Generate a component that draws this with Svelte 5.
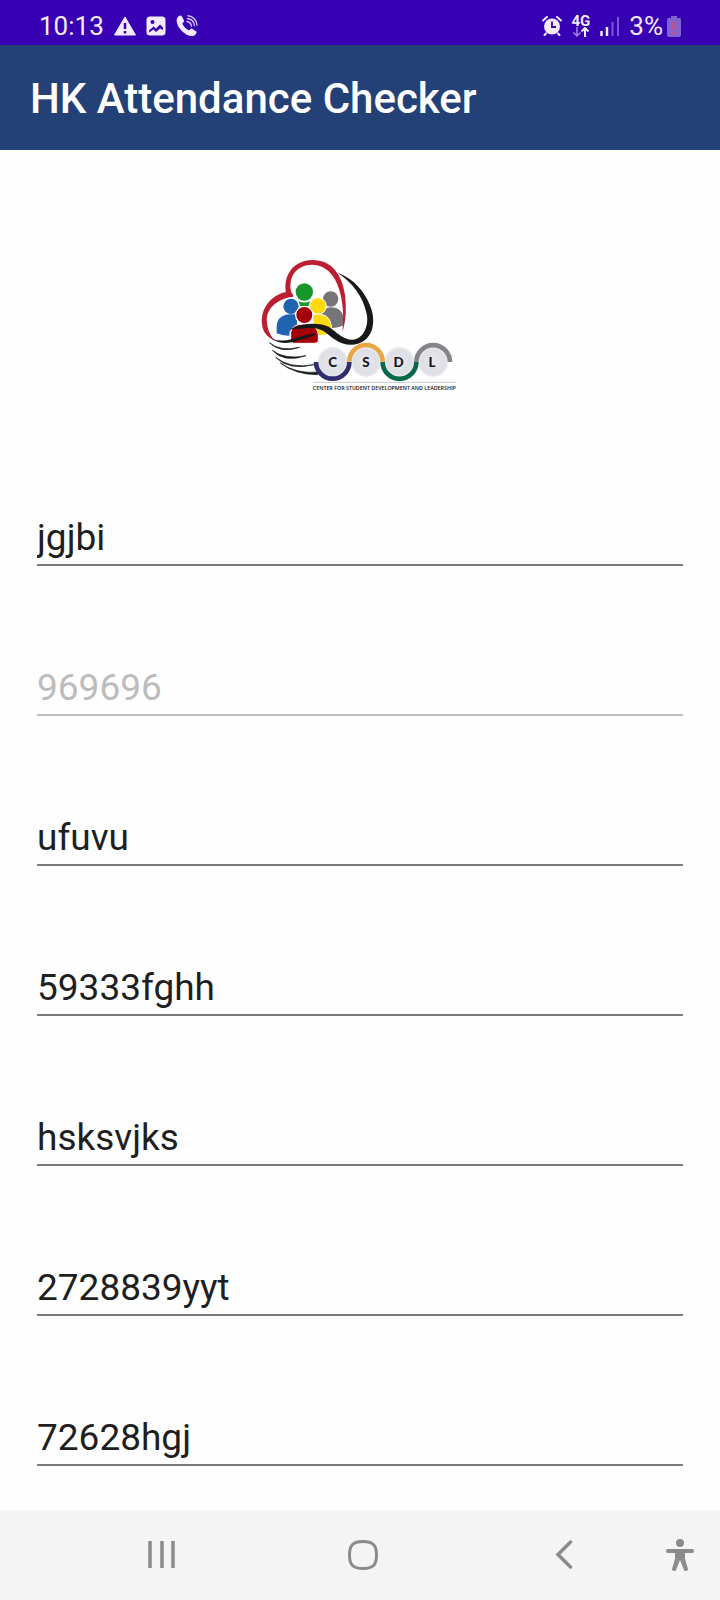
<script>
  let fields = $state([
    { id: 'name', label: 'Name', value: 'jgjbi', disabled: false },
    { id: 'student-id', label: 'Student ID', value: '969696', disabled: true },
    { id: 'course', label: 'Course', value: 'ufuvu', disabled: false },
    { id: 'contact', label: 'Contact', value: '59333fghh', disabled: false },
    { id: 'address', label: 'Address', value: 'hsksvjks', disabled: false },
    { id: 'guardian', label: 'Guardian', value: '2728839yyt', disabled: false },
    { id: 'guardian-contact', label: 'Guardian contact', value: '72628hgj', disabled: false }
  ]);
</script>

<div class="screen">
  <div class="status">
    <div class="group">
      <span class="time">10:13</span>
      <svg width="22" height="20" viewBox="0 0 22 20" aria-hidden="true">
        <path d="M11 1 21.500 19H.5z" fill="#f3eaff" stroke="#f3eaff" stroke-linejoin="round" />
        <path d="M11 7v6M11 15v2.500" stroke="#3700b3" stroke-width="2.500" />
      </svg>
      <svg width="20" height="20" viewBox="0 0 20 20" aria-hidden="true">
        <rect x=".5" y=".5" width="19" height="19" rx="3.500" fill="#f3eaff" />
        <circle cx="6.500" cy="6" r="2" fill="#3700b3" />
        <path d="M3 14.500 7.500 10.500 10 12.500 14 8.500 17 11.500V14L14 12.500 10 16 7.500 13.500 3 16.500z" fill="#3700b3" />
      </svg>
      <svg width="22" height="22" viewBox="0 0 22 22" aria-hidden="true">
        <path d="M1 3.500C2.500.5 5-.2 6 1.500L8 5.500C8.500 7 6 8 6.500 9c1 2.500 3.500 5 6 6.200 1 .4 1.800-2 3.500-1.400l4 2.400c1.600 1-.3 4.300-3 4.800C9.500 22-1.500 10.500 1 3.500z" fill="#f3eaff" />
        <path d="M11 6.500c2.500.4 4 2 4.500 4.500M11.500 3.500c4 .5 6.500 3.500 7 7M12 .8c5 .4 8.700 4.500 9 9.200" fill="none" stroke="#d6c4f7" stroke-width="1.400" stroke-linecap="round" />
      </svg>
    </div>
    <div class="group right">
      <svg width="20" height="20" viewBox="0 0 20 20" aria-hidden="true">
        <circle cx="10" cy="10.500" r="8" fill="#f3eaff" />
        <path d="M1 4.500 5 1M19 4.500 15 1M4 17.500 2.500 19M16 17.500l1.500 1.500" stroke="#f3eaff" stroke-width="2" stroke-linecap="round" />
        <path d="M10 5.500v5.500h4" fill="none" stroke="#3700b3" stroke-width="1.800" />
      </svg>
      <span class="network">
        <span>4G</span>
        <svg width="18" height="10" viewBox="0 0 18 10" aria-hidden="true">
          <path d="M5 0v9M1.500 5.500 5 9l3.500-3.500" fill="none" stroke="#9b7ee0" stroke-width="1.600" />
          <path d="M13 10V1M9.500 4.500 13 1l3.500 3.500" fill="none" stroke="#f3eaff" stroke-width="2" />
        </svg>
      </span>
      <svg width="19" height="20" viewBox="0 0 19 20" aria-hidden="true">
        <path d="M1.500 20v-5M7 20v-9" stroke="#f3eaff" stroke-width="2.500" />
        <path d="M12.500 20V6M18 20V1" stroke="#7f57d6" stroke-width="2" />
      </svg>
      <span class="power">
        <span>3%</span>
        <svg width="14" height="21" viewBox="0 0 14 21" aria-hidden="true">
          <path d="M4 0h6v2h2.500Q14 2 14 4v15q0 2-2 2H2q-2 0-2-2V4q0-2 1.500-2H4z" fill="#8064cf" />
          <path d="M7 6v8M7 15.500v2.500" stroke="#c0528f" stroke-width="3.500" />
        </svg>
      </span>
    </div>
  </div>

  <header><h1>HK Attendance Checker</h1></header>

  <main>
    <svg class="logo" viewBox="30 0 600 450" role="img" aria-label="CSDL, Center for Student Development and Leadership">
      <defs>
        <radialGradient id="disc">
          <stop offset="0" stop-color="#e8e8ee" />
          <stop offset=".8" stop-color="#dedee5" />
          <stop offset="1" stop-color="#ececf0" />
        </radialGradient>
      </defs>
      <g fill="#757579">
        <circle cx="242" cy="147" r="23" />
        <path d="M216 233V190q5-18 26-18 36 0 40 38v15q-30 14-66 8z" />
      </g>
      <g fill="#17962b">
        <circle cx="163" cy="126" r="26" />
        <path d="M145 154q18 7 35 0l-5 15H151z" />
      </g>
      <g fill="#2063ae">
        <circle cx="123" cy="169" r="23" />
        <path d="M80 250v-22q3-33 40-35h21v35l-22 15-1 14q-20 1-38-7z" />
      </g>
      <g fill="#ffd90a" stroke="#fff" stroke-width="3">
        <circle cx="204" cy="168" r="25" />
        <path d="M184 194q55-10 60 33v21q-15 10-42 9z" />
      </g>
      <circle cx="163" cy="195" r="26" fill="#a50008" stroke="#fff" stroke-width="4" />
      <path d="M122 275v-28q4-25 40-25 38 0 43 30v22q-4 6-12 6h-62z" fill="#a50008" stroke="#fff" stroke-width="3" />
      <path d="M36 223C31 176 62 138 104 127L126 129 131 140C88 144 46 172 51 217 53 242 62 260 78 274 51 263 38 245 36 223z" fill="#bd1f32" />
      <path d="M110 137C95 80 129 30 187 30 245 30 276 73 285 135 290 180 288 214 277 246 282 197 279 157 268 120 255 72 225 45 187 44 140 44 111 82 125 130z" fill="#bd1f32" />
      <path d="M262 68C315 86 353 135 366 184 381 247 347 284 306 284 263 285 246 259 219 242 190 227 158 237 119 238 164 217 207 218 236 230 262 248 280 269 307 269 339 268 358 228 350 191 338 137 307 97 262 68z" fill="#171819" />
      <path d="M64 266Q94 276 124 268q38-14 74-18-8 12-46 19-50 21-88-3z" fill="#171819" />
      <path d="M58 278Q91 305 149 292 93 312 58 278zM67 301Q104 330 168 317 102 340 67 301zM77 322Q120 357 192 344 116 363 77 322zM91 339Q140 373 206 366 204 371 202 374 135 374 91 339z" fill="#171819" stroke="#171819" stroke-width="2" />
      <g fill="url(#disc)">
        <circle cx="248" cy="336" r="45" />
        <circle cx="348" cy="336" r="45" />
        <circle cx="448" cy="336" r="45" />
        <circle cx="549" cy="336" r="45" />
      </g>
      <g fill="none" stroke-width="14">
        <path d="M198 336a50 50 0 0 0 100 0" stroke="#302c70" />
        <path d="M298 335a50 50 0 0 1 100 0" stroke="#e8a643" />
        <path d="M398 336a50 50 0 0 0 101 0" stroke="#07694b" />
        <path d="M499 336a50 50 0 0 1 101 0" stroke="#858587" />
      </g>
      <g class="initials">
        <text x="248" y="350">C</text>
        <text x="348" y="350">S</text>
        <text x="446" y="350">D</text>
        <text x="546" y="350">L</text>
      </g>
      <path d="M190 397H617" stroke="#aaa" stroke-width="2" />
      <text class="motto" x="403" y="419">CENTER FOR STUDENT DEVELOPMENT AND LEADERSHIP</text>
    </svg>

    <form>
      {#each fields as field (field.id)}
        <input id={field.id} aria-label={field.label} type="text" bind:value={field.value} disabled={field.disabled} autocomplete="off" spellcheck="false" />
      {/each}
    </form>
  </main>

  <nav>
    <div class="keys">
      <button aria-label="Recent apps">
        <svg width="28" height="30" viewBox="0 0 28 30"><path d="M2 1v27M14 1v27M25 1v27" stroke="#8b8b8b" stroke-width="3.500" /></svg>
      </button>
      <button aria-label="Home">
        <svg width="30" height="30" viewBox="0 0 30 30"><path d="M15 1.500C25 1.500 28.500 5 28.500 15S25 28.500 15 28.500 1.500 25 1.500 15 5 1.500 15 1.500z" fill="none" stroke="#8b8b8b" stroke-width="3" /></svg>
      </button>
      <button aria-label="Back">
        <svg width="18" height="30" viewBox="0 0 18 30"><path d="M15.500 2 3 14.500l12.500 12.500" fill="none" stroke="#8b8b8b" stroke-width="3.500" stroke-linecap="round" /></svg>
      </button>
    </div>
    <button class="access" aria-label="Accessibility">
      <svg width="28" height="34" viewBox="0 0 28 34">
        <circle cx="14" cy="5" r="4" fill="#8b8b8b" />
        <path d="M2 11h24q2 0 2 2t-2 2h-7v6l3 10q0 2-2 2t-2-1l-4-10-4 10q0 1-2 1t-2-2l3-10v-6H2q-2 0-2-2t2-2z" fill="#8b8b8b" />
      </svg>
    </button>
  </nav>
</div>

<style>
  :global(body) {
    margin: 0;
    background: #fefefe;
  }
  .screen {
    min-height: 100vh;
    display: flex;
    flex-direction: column;
    font-family: Roboto, sans-serif;
    background: #fefefe;
  }
  svg {
    display: block;
    flex: none;
  }
  .status {
    box-sizing: border-box;
    height: 45px;
    padding: 8px 39px 0;
    display: flex;
    justify-content: space-between;
    background: #3700b3;
    color: #f3eaff;
    font-size: 26px;
    line-height: 36px;
  }
  .group {
    display: flex;
    align-items: center;
    height: 36px;
    gap: 10px;
  }
  .network {
    display: flex;
    flex-direction: column;
    align-items: center;
    font-size: 15px;
    font-weight: 700;
    line-height: 12px;
  }
  .power {
    display: flex;
    align-items: center;
    gap: 4px;
  }
  header {
    box-sizing: border-box;
    height: 105px;
    padding: 2px 30px 0;
    display: flex;
    align-items: center;
    background: #234077;
    color: #fff;
  }
  h1 {
    margin: 0;
    font-size: 42px;
    font-weight: 500;
    line-height: 48px;
  }
  main {
    flex: 1;
    padding: 100px 37px 0;
  }
  .logo {
    width: 200px;
    height: 150px;
    margin: 0 auto;
  }
  .initials {
    font: 900 40px Lato, sans-serif;
    fill: #16181c;
    text-anchor: middle;
  }
  .motto {
    font: 600 16px "Open Sans", sans-serif;
    fill: #111;
    text-anchor: middle;
  }
  form {
    padding-top: 106px;
    padding-bottom: 44px;
    display: flex;
    flex-direction: column;
    gap: 90px;
  }
  input {
    box-sizing: border-box;
    width: 100%;
    height: 60px;
    margin: 0;
    padding: 4px 0 0;
    border: 0;
    border-bottom: 2px solid #7b7b7b;
    border-radius: 0;
    outline: 0;
    background: transparent;
    color: #1f1f1f;
    font: 400 37px/44px Roboto, sans-serif;
  }
  input:disabled {
    color: #bcbcbc;
    border-color: #bebebe;
  }
  nav {
    display: flex;
    height: 90px;
    background: #f4f4f4;
  }
  .keys {
    flex: 1;
    display: flex;
    justify-content: space-between;
    padding-left: 87px;
  }
  button {
    width: 150px;
    padding: 0;
    border: 0;
    background: none;
    display: flex;
    align-items: center;
    justify-content: center;
  }
  .access {
    width: 81px;
  }
</style>
